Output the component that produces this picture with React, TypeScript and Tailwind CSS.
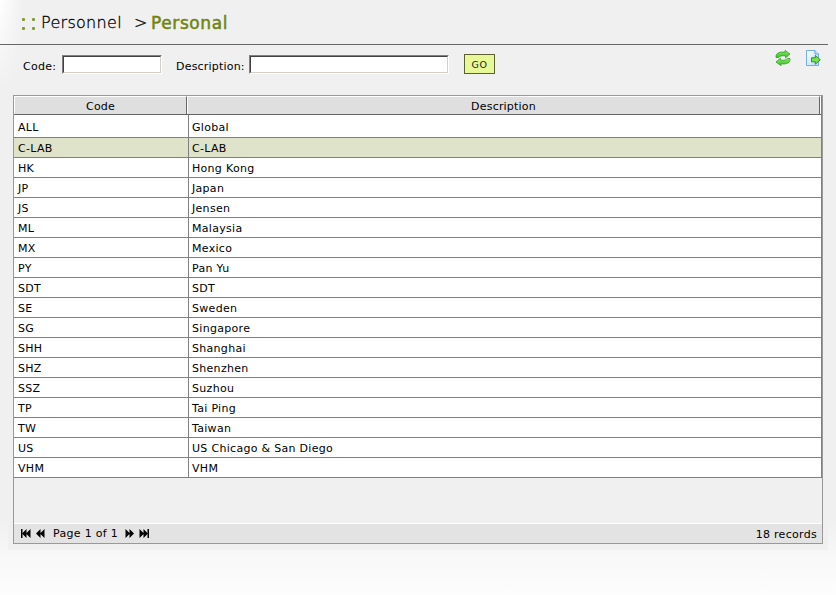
const rows: [string, string][] = [
  ["ALL", "Global"], ["C-LAB", "C-LAB"], ["HK", "Hong Kong"], ["JP", "Japan"],
  ["JS", "Jensen"], ["ML", "Malaysia"], ["MX", "Mexico"], ["PY", "Pan Yu"],
  ["SDT", "SDT"], ["SE", "Sweden"], ["SG", "Singapore"], ["SHH", "Shanghai"],
  ["SHZ", "Shenzhen"], ["SSZ", "Suzhou"], ["TP", "Tai Ping"], ["TW", "Taiwan"],
  ["US", "US Chicago & San Diego"], ["VHM", "VHM"],
];

function Dots() {
  return (
    <div className="mt-[1px] grid grid-cols-2 gap-x-[7px] gap-y-[6px]">
      {[0, 1, 2, 3].map((i) => (
        <span key={i} className="size-[3px] rounded-[1px] bg-[#869a33]" />
      ))}
    </div>
  );
}

function RefreshIcon() {
  return (
    <svg width="16" height="16" viewBox="0 0 16 16">
      <defs>
        <linearGradient id="green" x1="0" y1="0" x2="0" y2="1">
          <stop offset="0" stopColor="#8cec68" />
          <stop offset="1" stopColor="#3cba2a" />
        </linearGradient>
      </defs>
      <g fill="url(#green)" stroke="#2a9f20" strokeWidth="0.8" strokeLinejoin="round">
        <path d="M1 7.4 C0.6 3.4 4 1.5 10 2.2 V0.4 L15 4 L10.6 7.8 V5.9 C6.5 5.2 4.5 6.4 3.6 7.6Z" />
        <path d="M15 8.6 C15.4 12.6 12 14.5 6 13.8 V15.6 L1 12 L5.4 8.2 V10.1 C9.5 10.8 11.5 9.6 12.4 8.4Z" />
      </g>
    </svg>
  );
}

function ExportIcon() {
  return (
    <svg width="15" height="16" viewBox="0 0 15 16">
      <defs>
        <linearGradient id="page" x1="0" y1="0" x2="1" y2="1">
          <stop offset="0" stopColor="#ffffff" />
          <stop offset="1" stopColor="#b4d9fb" />
        </linearGradient>
      </defs>
      <path d="M.5 .5H9L12.5 4V15.5H.5Z" fill="url(#page)" stroke="#75ade4" />
      <path d="M9 .5V4H12.5" fill="#dceeff" stroke="#5f9ddd" />
      <path d="M5.5 7.8H9.3V5.4L14.3 9.8L9.3 14.2V11.8H5.5Z" fill="#78e350" stroke="#2a941f" />
    </svg>
  );
}

function Pager({ bars, flip }: { bars: boolean; flip: boolean }) {
  return (
    <svg width={bars ? 10 : 9} height="9" viewBox={bars ? "0 0 10 9" : "0 0 9 9"} className={flip ? "-scale-x-100" : ""}>
      {bars && <path d="M0 0H1.5V9H0Z" />}
      <path d={bars ? "M1 4.5L5.5 0V9ZM5 4.5L9.5 0V9Z" : "M0 4.5L4.5 0V9ZM4 4.5L8.5 0V9Z"} />
    </svg>
  );
}

function Field({ className }: { className: string }) {
  return (
    <div className={`h-[19px] border border-t-[#808080] border-l-[#808080] border-r-white border-b-white ${className}`}>
      <div className="h-full border border-t-[#404040] border-l-[#404040] border-r-[#d4d0c8] border-b-[#d4d0c8] bg-white" />
    </div>
  );
}

export default function App() {
  return (
    <div className="relative isolate h-[595px] w-[836px] overflow-hidden bg-[#f0f0f0] text-[11px] leading-[14px] text-black [font-family:'DejaVu_Sans',Verdana,sans-serif]">
      {/* Soft highlights around the panel */}
      <div className="absolute inset-y-0 left-0 -z-10 w-[24px] bg-linear-to-r from-white to-transparent [mask-image:linear-gradient(to_bottom,black,transparent_90px)]" />
      <div className="absolute inset-x-0 bottom-0 -z-10 h-[75px] bg-linear-to-b from-[#f0f0f0] via-[#f8f8f8] to-[#fdfdfd]" />
      <div className="absolute top-[520px] left-[8px] -z-10 h-[30px] w-[820px] bg-[#f0f0f0]" />

      <header className="flex h-[45px] w-[828px] items-center border-b border-[#666] pt-[2px] pl-[22px]">
        <Dots />
        <span className="ml-[6px] w-[93px] text-[16px] leading-[20px] tracking-[0.3px] whitespace-nowrap [font-weight:200] [-webkit-text-stroke:0.3px_black]">Personnel</span>
        <span className="w-[17px] text-[16px] [font-weight:200] [-webkit-text-stroke:0.3px_black]">&gt;</span>
        <span className="text-[17px] leading-[20px] tracking-[0.6px] text-[#6f8412] [-webkit-text-stroke:0.5px_#6f8412]">Personal</span>
      </header>

      <div className="flex h-[50px] pl-[23px]">
        <span className="mt-[15px] w-[39px] whitespace-nowrap tracking-[0.3px]">Code:</span>
        <Field className="mt-[10px] w-[100px]" />
        <span className="mt-[15px] ml-[14px] w-[73px] whitespace-nowrap tracking-[0.2px]">Description:</span>
        <Field className="mt-[10px] w-[200px]" />
        <button className="mt-[9px] ml-[15px] h-[20px] w-[31px] border border-[#5c6030] bg-[#e7f896] pt-px text-[9.5px] leading-[18px] tracking-[0.5px] text-[#222]">GO</button>
        <div className="mt-[5px] ml-[280px] flex gap-[15px]">
          <RefreshIcon />
          <ExportIcon />
        </div>
      </div>

      <main className="ml-[13px] flex h-[449px] w-[810px] flex-col border border-[#999]">
        <div className="h-[382px] border-r border-[#808080] bg-white">
          <div className="flex h-[19px] border-b border-[#666] pr-px text-center leading-[19px]">
            <div className="w-[173px] border-t border-l border-r border-t-white border-l-white border-r-[#666] bg-[#dfdfdf] tracking-[0.2px]">Code</div>
            <div className="flex-1 border-t border-l border-r border-t-white border-l-white border-r-[#666] bg-[#dfdfdf] tracking-[0.2px]">Description</div>
          </div>
          {rows.map(([code, description], i) => (
            <div key={i} className={`flex border-b border-[#808080] tracking-[0.3px] ${i === 0 ? "h-[23px] leading-[25px]" : "h-[20px] leading-[22px]"} ${i === 1 ? "bg-[#dfe3ca]" : "bg-white"}`}>
              <span className="w-[175px] border-r border-[#808080] pl-[4px]">{code}</span>
              <span className="pl-[3px]">{description}</span>
            </div>
          ))}
        </div>
        <footer className="mt-auto flex h-[20px] items-center border-t border-white bg-[#e3e3e3] pr-[5px] pl-[7px]">
          <Pager bars flip={false} />
          <span className="ml-[5px]"><Pager bars={false} flip={false} /></span>
          <span className="ml-[8px] w-[72px] whitespace-nowrap tracking-[0.3px]">Page 1 of 1</span>
          <Pager bars={false} flip />
          <span className="ml-[5px]"><Pager bars flip /></span>
          <span className="ml-auto pt-[2px] tracking-[0.3px]">18 records</span>
        </footer>
      </main>
    </div>
  );
}
